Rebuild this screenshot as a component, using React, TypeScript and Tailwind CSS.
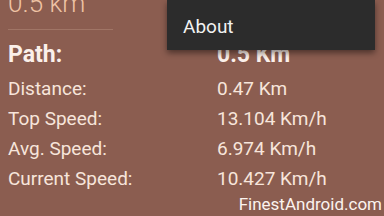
import React from "react";

const rows: [string, string][] = [
  ["Distance:", "0.47 Km"],
  ["Top Speed:", "13.104 Km/h"],
  ["Avg. Speed:", "6.974 Km/h"],
  ["Current Speed:", "10.427 Km/h"],
];

export default function App() {
  return (
    <div
      className="relative w-[384px] h-[216px] overflow-hidden bg-[#8b5d50]"
      style={{ fontFamily: "Roboto, 'Noto Sans', sans-serif" }}
    >
      <div className="pl-[8px]">
        <div className="h-[29px] overflow-hidden">
          <div className="mt-[-10px] text-[26px] leading-none text-[#efc3a4] font-light">0.5 km</div>
        </div>
        <div className="h-px w-[105px] bg-[#a07566]" />
        <div className="mt-[6px] grid grid-cols-[209px_1fr]">
          <div className="h-[38px] leading-[38px] text-[23px] font-bold text-[#fbf0ea]">Path:</div>
          <div className="h-[38px] leading-[38px] text-[23px] font-bold text-[#fbf0ea]">0.5 Km</div>
          {rows.map(([l, v]) => (
            <React.Fragment key={l}>
              <div className="h-[30px] leading-[30px] text-[19px] text-[#f7e5db]">{l}</div>
              <div className="h-[30px] leading-[30px] text-[19px] text-[#f7e5db]">{v}</div>
            </React.Fragment>
          ))}
        </div>
      </div>
      <div className="absolute top-0 left-[167px] w-[208px] h-[50px] bg-[#2c2c2c] shadow-[0_3px_6px_rgba(0,0,0,0.45)]">
        <div className="pl-[16px] pt-[17px] text-[19px] leading-none text-[#f2f2f2]">About</div>
      </div>
      <div className="absolute right-[2px] top-[196px] text-[17px] leading-none text-[#fbf3ee]">
        FinestAndroid.com
      </div>
    </div>
  );
}
